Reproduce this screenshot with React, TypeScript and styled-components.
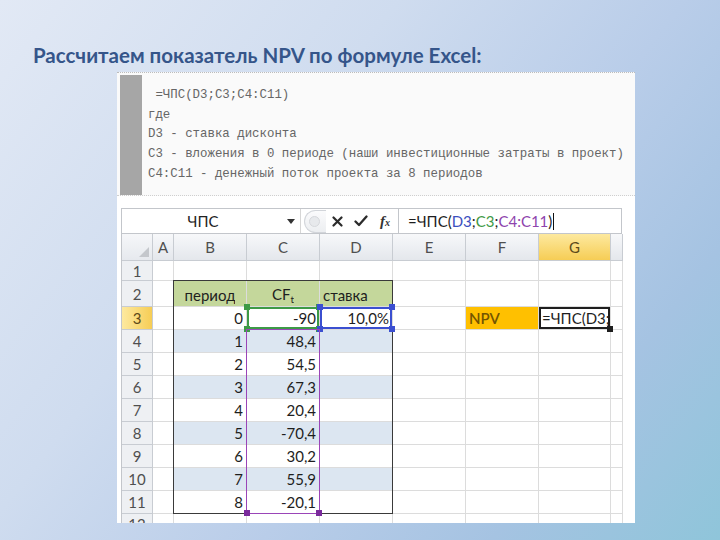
import styled, { createGlobalStyle } from "styled-components";

const GlobalStyle = createGlobalStyle`
  html, body {
    margin: 0;
    padding: 0;
  }
  body {
    width: 720px;
    height: 540px;
    overflow: hidden;
    font-family: "Liberation Sans", Arial, sans-serif;
  }
`;

type Align = "left" | "center" | "right";
type CellData = { text?: React.ReactNode; align?: Align };
type Row = { n: number; cells: Record<string, CellData> };

const COLS = ["A", "B", "C", "D", "E", "F", "G"];

const codeLines = [
  " =ЧПС(D3;C3;C4:C11)",
  "где",
  "D3 - ставка дисконта",
  "C3 - вложения в 0 периоде (наши инвестиционные затраты в проект)",
  "C4:C11 - денежный поток проекта за 8 периодов",
];

const flows: [string, string][] = [
  ["1", "48,4"],
  ["2", "54,5"],
  ["3", "67,3"],
  ["4", "20,4"],
  ["5", "-70,4"],
  ["6", "30,2"],
  ["7", "55,9"],
  ["8", "-20,1"],
];

function buildRows(): Row[] {
  return [
    { n: 1, cells: {} },
    {
      n: 2,
      cells: {
        B: { text: "период", align: "center" },
        C: {
          text: (
            <>
              CF<Sub>t</Sub>
            </>
          ),
          align: "center",
        },
        D: { text: "ставка", align: "left" },
      },
    },
    {
      n: 3,
      cells: {
        B: { text: "0", align: "right" },
        C: { text: "-90", align: "right" },
        D: { text: "10,0%", align: "right" },
        F: { text: "NPV", align: "left" },
        G: { text: "=ЧПС(D3;C3;C4:C11)", align: "left" },
      },
    },
    ...flows.map(([p, v], i) => ({
      n: i + 4,
      cells: {
        B: { text: p, align: "right" as Align },
        C: { text: v, align: "right" as Align },
      },
    })),
    { n: 12, cells: {} },
  ];
}

function cellFill(n: number, col: string): string | undefined {
  const inTable = col === "B" || col === "C" || col === "D";
  if (n === 2 && inTable) return "#c4d79b";
  if (inTable && n >= 4 && n <= 10 && n % 2 === 0) return "#dce6f1";
  if (n === 3 && col === "F") return "#ffc000";
  return undefined;
}

function cellRing(n: number, col: string): string | undefined {
  if (n !== 3) return undefined;
  if (col === "C") return "#3d9a46";
  if (col === "D") return "#3b4fd0";
  if (col === "G") return "#1e1e1e";
  return undefined;
}

export default function App() {
  const rows = buildRows();
  return (
    <>
      <GlobalStyle />
      <Slide>
        <Title>Рассчитаем показатель NPV по формуле Excel:</Title>
        <Figure>
          <CodeBox>
            <GrayBar />
            <CodeLines>
              {codeLines.map((l, i) => (
                <div key={i}>{l}</div>
              ))}
            </CodeLines>
          </CodeBox>

          <Sheet>
            <FormulaBar>
              <NameBox>
                <NameText>ЧПС</NameText>
                <DropArrow>
                  <svg width="8" height="5" viewBox="0 0 8 5">
                    <path d="M0 0 H8 L4 5 Z" fill="#333" />
                  </svg>
                </DropArrow>
              </NameBox>
              <Buttons>
                <Knob>
                  <KnobDot />
                </Knob>
                <IconBtn>
                  <svg width="11" height="11" viewBox="0 0 11 11">
                    <path d="M1.5 1.5 L9.5 9.5 M9.5 1.5 L1.5 9.5" stroke="#2b2b2b" strokeWidth="2.2" strokeLinecap="round" />
                  </svg>
                </IconBtn>
                <IconBtn>
                  <svg width="14" height="12" viewBox="0 0 14 12">
                    <path d="M1.5 6.5 L5 10 L12.5 1.5" stroke="#2b2b2b" strokeWidth="2.3" fill="none" strokeLinecap="round" strokeLinejoin="round" />
                  </svg>
                </IconBtn>
                <FxLabel>
                  f<small>x</small>
                </FxLabel>
              </Buttons>
              <FormulaInput>
                =ЧПС(<Ref $c="#3b4fc0">D3</Ref>;<Ref $c="#3f9a46">C3</Ref>;<Ref $c="#8e44ad">C4:C11</Ref>)<Caret />
              </FormulaInput>
            </FormulaBar>

            <Grid>
              <CornerCell $c={1} $r={1}>
                <svg width="10" height="10" viewBox="0 0 10 10">
                  <path d="M10 0 V10 H0 Z" fill="#c4c7cc" />
                </svg>
              </CornerCell>
              {COLS.map((c, i) => (
                <ColHead key={c} $c={i + 2} $r={1} $active={c === "G"}>
                  {c}
                </ColHead>
              ))}
              <ColHead $c={9} $r={1} $active={false} />

              {rows.map((r) => (
                <RowGroup key={r.n} row={r} />
              ))}

              <TableFrame />
              <RangeFrame>
                <Handle $color="#7a2a9c" $pos="bl" />
                <Handle $color="#7a2a9c" $pos="br" />
              </RangeFrame>
            </Grid>
          </Sheet>
        </Figure>
      </Slide>
    </>
  );
}

function RowGroup({ row }: { row: Row }) {
  const r = row.n + 1;
  return (
    <>
      <RowHead $c={1} $r={r} $active={row.n === 3}>
        {row.n}
      </RowHead>
      {COLS.map((c, i) => {
        const d = row.cells[c];
        const ring = cellRing(row.n, c);
        return (
          <Cell
            key={c}
            $c={i + 2}
            $r={r}
            $align={d?.align ?? "left"}
            $fill={cellFill(row.n, c)}
            $ring={ring}
            $tall={row.n === 2}
            $npv={row.n === 3 && c === "F"}
          >
            <CellText>{d?.text}</CellText>
            {ring && c !== "G" && (
              <>
                <Handle $color={ring} $pos="tl" />
                <Handle $color={ring} $pos="tr" />
                <Handle $color={ring} $pos="bl" />
                <Handle $color={ring} $pos="br" />
              </>
            )}
            {ring && c === "G" && <Handle $color={ring} $pos="br" />}
          </Cell>
        );
      })}
      <Cell $c={9} $r={r} $align="left" />
    </>
  );
}

const Slide = styled.div`
  width: 720px;
  height: 540px;
  box-sizing: border-box;
  padding-top: 41px;
  display: flex;
  flex-direction: column;
  background: linear-gradient(
    128deg,
    #e2e9f5 0%,
    #cfdcef 35%,
    #b9cde9 60%,
    #a5c3e2 80%,
    #8fc5da 100%
  );
`;

const Title = styled.h1`
  margin: 0 0 0 33px;
  font-family: Lato, "Liberation Sans", sans-serif;
  font-weight: 700;
  font-size: 20.5px;
  line-height: 28px;
  color: #35558a;
`;

const Figure = styled.div`
  margin: 3px 0 0 117px;
  width: 518px;
  height: 451px;
  background: #ffffff;
  overflow: hidden;
  display: flex;
  flex-direction: column;
`;

const CodeBox = styled.div`
  height: 124px;
  flex: none;
  box-sizing: border-box;
  display: flex;
  background: #fafafa;
  border-top: 1px dotted #bcbcbc;
  border-bottom: 1px dotted #cfcfcf;
  padding: 2px 0 0 3px;
`;

const GrayBar = styled.div`
  width: 22px;
  flex: none;
  background: #a6a6a6;
`;

const CodeLines = styled.div`
  padding: 11px 0 0 6px;
  font-family: "Liberation Mono", "DejaVu Sans Mono", monospace;
  font-size: 12.4px;
  line-height: 19.7px;
  color: #666666;
  white-space: pre;
`;

const Sheet = styled.div`
  margin: 12px 0 0 4px;
  width: 501px;
  flex: none;
  display: flex;
  flex-direction: column;
`;

const FormulaBar = styled.div`
  height: 25px;
  flex: none;
  box-sizing: border-box;
  display: flex;
  align-items: stretch;
  border-top: 1px solid #c3c6cb;
  border-left: 1px solid #c3c6cb;
  background: #ffffff;
`;

const NameBox = styled.div`
  width: 178px;
  display: flex;
  align-items: center;
  border-right: 1px solid #d6d6d6;
`;

const NameText = styled.span`
  flex: 1;
  text-align: center;
  font-family: Lato, "Liberation Sans", sans-serif;
  font-size: 15px;
  color: #222;
`;

const DropArrow = styled.span`
  width: 14px;
  display: flex;
  justify-content: center;
  margin-right: 2px;
`;

const Buttons = styled.div`
  width: 97px;
  display: flex;
  align-items: center;
  background: #ffffff;
`;

const Knob = styled.div`
  width: 22px;
  height: 23px;
  margin-left: 3px;
  box-sizing: border-box;
  border: 1px solid #d2d5da;
  border-right: none;
  border-radius: 12px 0 0 12px;
  background: linear-gradient(#fbfbfc, #eceef1);
  display: flex;
  align-items: center;
  padding-left: 4px;
`;

const KnobDot = styled.div`
  width: 9px;
  height: 9px;
  border-radius: 50%;
  background: #e7e9ec;
  border: 1px solid #d6d8dc;
`;

const IconBtn = styled.span`
  width: 23px;
  display: flex;
  justify-content: center;
  align-items: center;
`;

const FxLabel = styled.span`
  width: 26px;
  text-align: center;
  font-family: "Liberation Serif", "DejaVu Serif", serif;
  font-style: italic;
  font-weight: 700;
  font-size: 15px;
  color: #333;
  small {
    font-size: 10px;
  }
`;

const FormulaInput = styled.div`
  flex: 1;
  display: flex;
  align-items: center;
  padding-left: 9px;
  border-left: 1px solid #c3c6cb;
  border-right: 1px solid #c3c6cb;
  font-family: Lato, "Liberation Sans", sans-serif;
  font-size: 15px;
  color: #1e1e1e;
  white-space: pre;
`;

const Ref = styled.span<{ $c: string }>`
  color: ${(p) => p.$c};
`;

const Caret = styled.span`
  width: 1px;
  height: 17px;
  background: #111;
  margin-left: 1px;
`;

const Grid = styled.div`
  display: grid;
  grid-template-columns: 31px 21px 73px 73px 73px 73px 73px 72px 12px;
  grid-template-rows: 27px 20px 26px repeat(9, 23px) 20px;
  border-left: 1px solid #c3c6cb;
  border-top: 1px solid #c3c6cb;
  background: #ffffff;
`;

const HeadBase = styled.div<{ $c: number; $r: number }>`
  grid-column: ${(p) => p.$c};
  grid-row: ${(p) => p.$r};
  box-sizing: border-box;
  display: flex;
  align-items: center;
  justify-content: center;
  font-family: Lato, "Liberation Sans", sans-serif;
  font-size: 15px;
  color: #4f4f4f;
  border-right: 1px solid #c8ccd2;
  border-bottom: 1px solid #c8ccd2;
`;

const CornerCell = styled(HeadBase)`
  background: linear-gradient(#f6f7f9, #e6e9ee);
  align-items: flex-end;
  justify-content: flex-end;
  padding: 0 3px 3px 0;
`;

const ColHead = styled(HeadBase)<{ $active: boolean }>`
  background: ${(p) =>
    p.$active
      ? "linear-gradient(#fde99f, #f6cd55)"
      : "linear-gradient(#f7f8fa, #e4e7ec)"};
  color: ${(p) => (p.$active ? "#5c4a1a" : "#4f4f4f")};
`;

const RowHead = styled(HeadBase)<{ $active: boolean }>`
  background: ${(p) =>
    p.$active ? "linear-gradient(90deg, #fde99f, #f6cd55)" : "#eef0f3"};
  color: ${(p) => (p.$active ? "#5c4a1a" : "#4f4f4f")};
`;

const Cell = styled.div<{
  $c: number;
  $r: number;
  $align: Align;
  $fill?: string;
  $ring?: string;
  $tall?: boolean;
  $npv?: boolean;
}>`
  grid-column: ${(p) => p.$c};
  grid-row: ${(p) => p.$r};
  position: relative;
  box-sizing: border-box;
  display: flex;
  align-items: center;
  justify-content: ${(p) =>
    p.$align === "right" ? "flex-end" : p.$align === "center" ? "center" : "flex-start"};
  padding: ${(p) =>
    p.$align === "right" ? "0 3px 0 0" : p.$align === "center" ? "0" : "0 0 0 3px"};
  padding-top: ${(p) => (p.$tall ? "2px" : "0")};
  min-width: 0;
  overflow: hidden;
  background: ${(p) => p.$fill ?? "#ffffff"};
  border-right: 1px solid #dcdcdc;
  border-bottom: 1px solid #dcdcdc;
  font-family: Lato, "Liberation Sans", sans-serif;
  font-size: 15px;
  font-weight: ${(p) => (p.$npv ? 600 : 400)};
  color: ${(p) => (p.$npv ? "#735500" : "#1e1e1e")};
  ${(p) =>
    p.$ring && `box-shadow: inset 0 0 0 2px ${p.$ring}; z-index: 2; overflow: visible;`}
`;

const CellText = styled.span`
  white-space: nowrap;
  overflow: hidden;
  text-overflow: clip;
  max-width: 100%;
`;

const Sub = styled.sub`
  font-size: 10px;
  vertical-align: -3px;
`;

const Handle = styled.span<{ $color: string; $pos: "tl" | "tr" | "bl" | "br" }>`
  position: absolute;
  width: 6px;
  height: 6px;
  background: ${(p) => p.$color};
  ${(p) => (p.$pos[0] === "t" ? "top: -3px;" : "bottom: -3px;")}
  ${(p) => (p.$pos[1] === "l" ? "left: -3px;" : "right: -3px;")}
  z-index: 4;
`;

const TableFrame = styled.div`
  grid-column: 3 / 6;
  grid-row: 3 / 13;
  margin: -1px 0 0 -1px;
  border: 1.5px solid #3a3a3a;
  pointer-events: none;
  z-index: 1;
`;

const RangeFrame = styled.div`
  position: relative;
  grid-column: 4;
  grid-row: 5 / 13;
  margin: -1px 0 0 -1px;
  border: 1.5px solid #9a45b8;
  pointer-events: none;
  z-index: 3;
`;
